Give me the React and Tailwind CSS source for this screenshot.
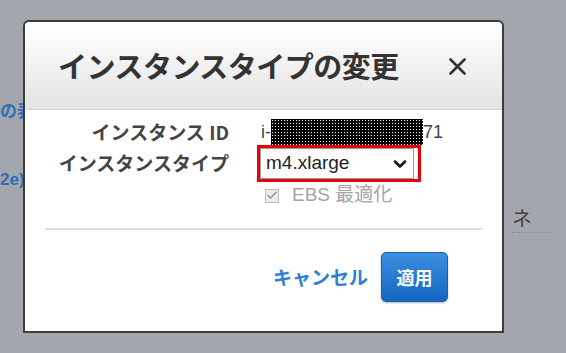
import { ChevronDown, Check } from 'lucide-react';

export default function App() {
  return (
    <div className="relative w-[566px] h-[353px] overflow-hidden bg-[#a3a6ac] font-['Noto_Sans_CJK_JP','Noto_Sans',sans-serif]">
      {/* page behind the dialog */}
      <div className="absolute left-[0px] top-[97px] text-[17px] font-bold text-[#2f6fb5]">の表</div>
      <div className="absolute left-[0px] top-[167px] text-[17px] font-bold text-[#2f6fb5] font-['Liberation_Sans',sans-serif]">2e)</div>
      <div className="absolute left-[512px] top-[203px] text-[20px] text-[#444]">ネ</div>
      <div className="absolute left-[512px] top-[232px] w-[40px] border-t border-dotted border-[#888]" />

      {/* dialog */}
      <div className="absolute left-[23px] top-[20px] w-[481px] h-[313px] bg-white border-2 border-[#3c3c3c] rounded-t-[6px] flex flex-col">
        <div className="h-[88px] shrink-0 flex items-center justify-between pl-[33px] pr-[36px] rounded-t-[5px] bg-gradient-to-b from-white to-[#e4e4e4] border-b border-[#d6d6d6]">
          <h1 className="text-[29px] font-bold text-[#333] tracking-[-0.5px]">インスタンスタイプの変更</h1>
          <svg width="17" height="17" viewBox="0 0 17 17" className="mt-[2px]">
            <path d="M1.5 1.5 L15.5 15.5 M15.5 1.5 L1.5 15.5" stroke="#333" strokeWidth="2.6" strokeLinecap="round" />
          </svg>
        </div>

        <div className="flex flex-col pt-[8px]">
          <div className="flex items-center h-[28px]">
            <div className="w-[204px] text-right text-[19px] font-bold text-[#444]">インスタンス ID</div>
            <div className="ml-[32px] flex items-center text-[18px] text-[#444] font-['Liberation_Sans',sans-serif]">
              <span>i-</span>
              <span className="inline-block w-[152px] h-[26px] bg-black bg-[radial-gradient(circle,#fff_0.8px,transparent_1px)] bg-[length:3px_3px]" />
              <span>71</span>
            </div>
          </div>

          <div className="flex items-center h-[37px] -mt-[1px]">
            <div className="w-[204px] text-right text-[19px] font-bold text-[#444]">インスタンスタイプ</div>
            <div className="ml-[28px] w-[164px] h-[37px] border-[3px] border-[#e8000b] pr-[4px]">
              <div className="h-full border border-[#9a9a9a] flex items-center justify-between pl-[5px] pr-[3px] bg-white">
                <span className="text-[19px] text-[#222] font-['Liberation_Sans',sans-serif]">m4.xlarge</span>
                <ChevronDown size={20} strokeWidth={3} className="text-[#111]" />
              </div>
            </div>
          </div>

          <div className="flex items-center h-[27px]">
            <div className="ml-[240px] w-[14px] h-[14px] border border-[#bdbdbd] bg-[#ececec] flex items-center justify-center">
              <Check size={13} strokeWidth={3.5} className="text-[#9a9a9a]" />
            </div>
            <span className="ml-[13px] text-[19px] text-[#a5a5a5] font-['Liberation_Sans','Noto_Sans_CJK_JP',sans-serif]">EBS 最適化</span>
          </div>
        </div>

        <div className="mx-[20px] mt-[19px] h-[2px] bg-[#dedede]" />

        <div className="flex items-center justify-end pr-[54px] mt-[22px] gap-[13px]">
          <span className="text-[19px] font-bold text-[#2e7fd4]">キャンセル</span>
          <button className="w-[67px] h-[50px] rounded-[5px] border border-[#1a5fb0] bg-gradient-to-b from-[#3a8fdf] to-[#1566c2] text-white text-[18px] font-bold shadow-[0_1px_2px_rgba(0,0,0,0.3)]">
            適用
          </button>
        </div>
      </div>
    </div>
  );
}
